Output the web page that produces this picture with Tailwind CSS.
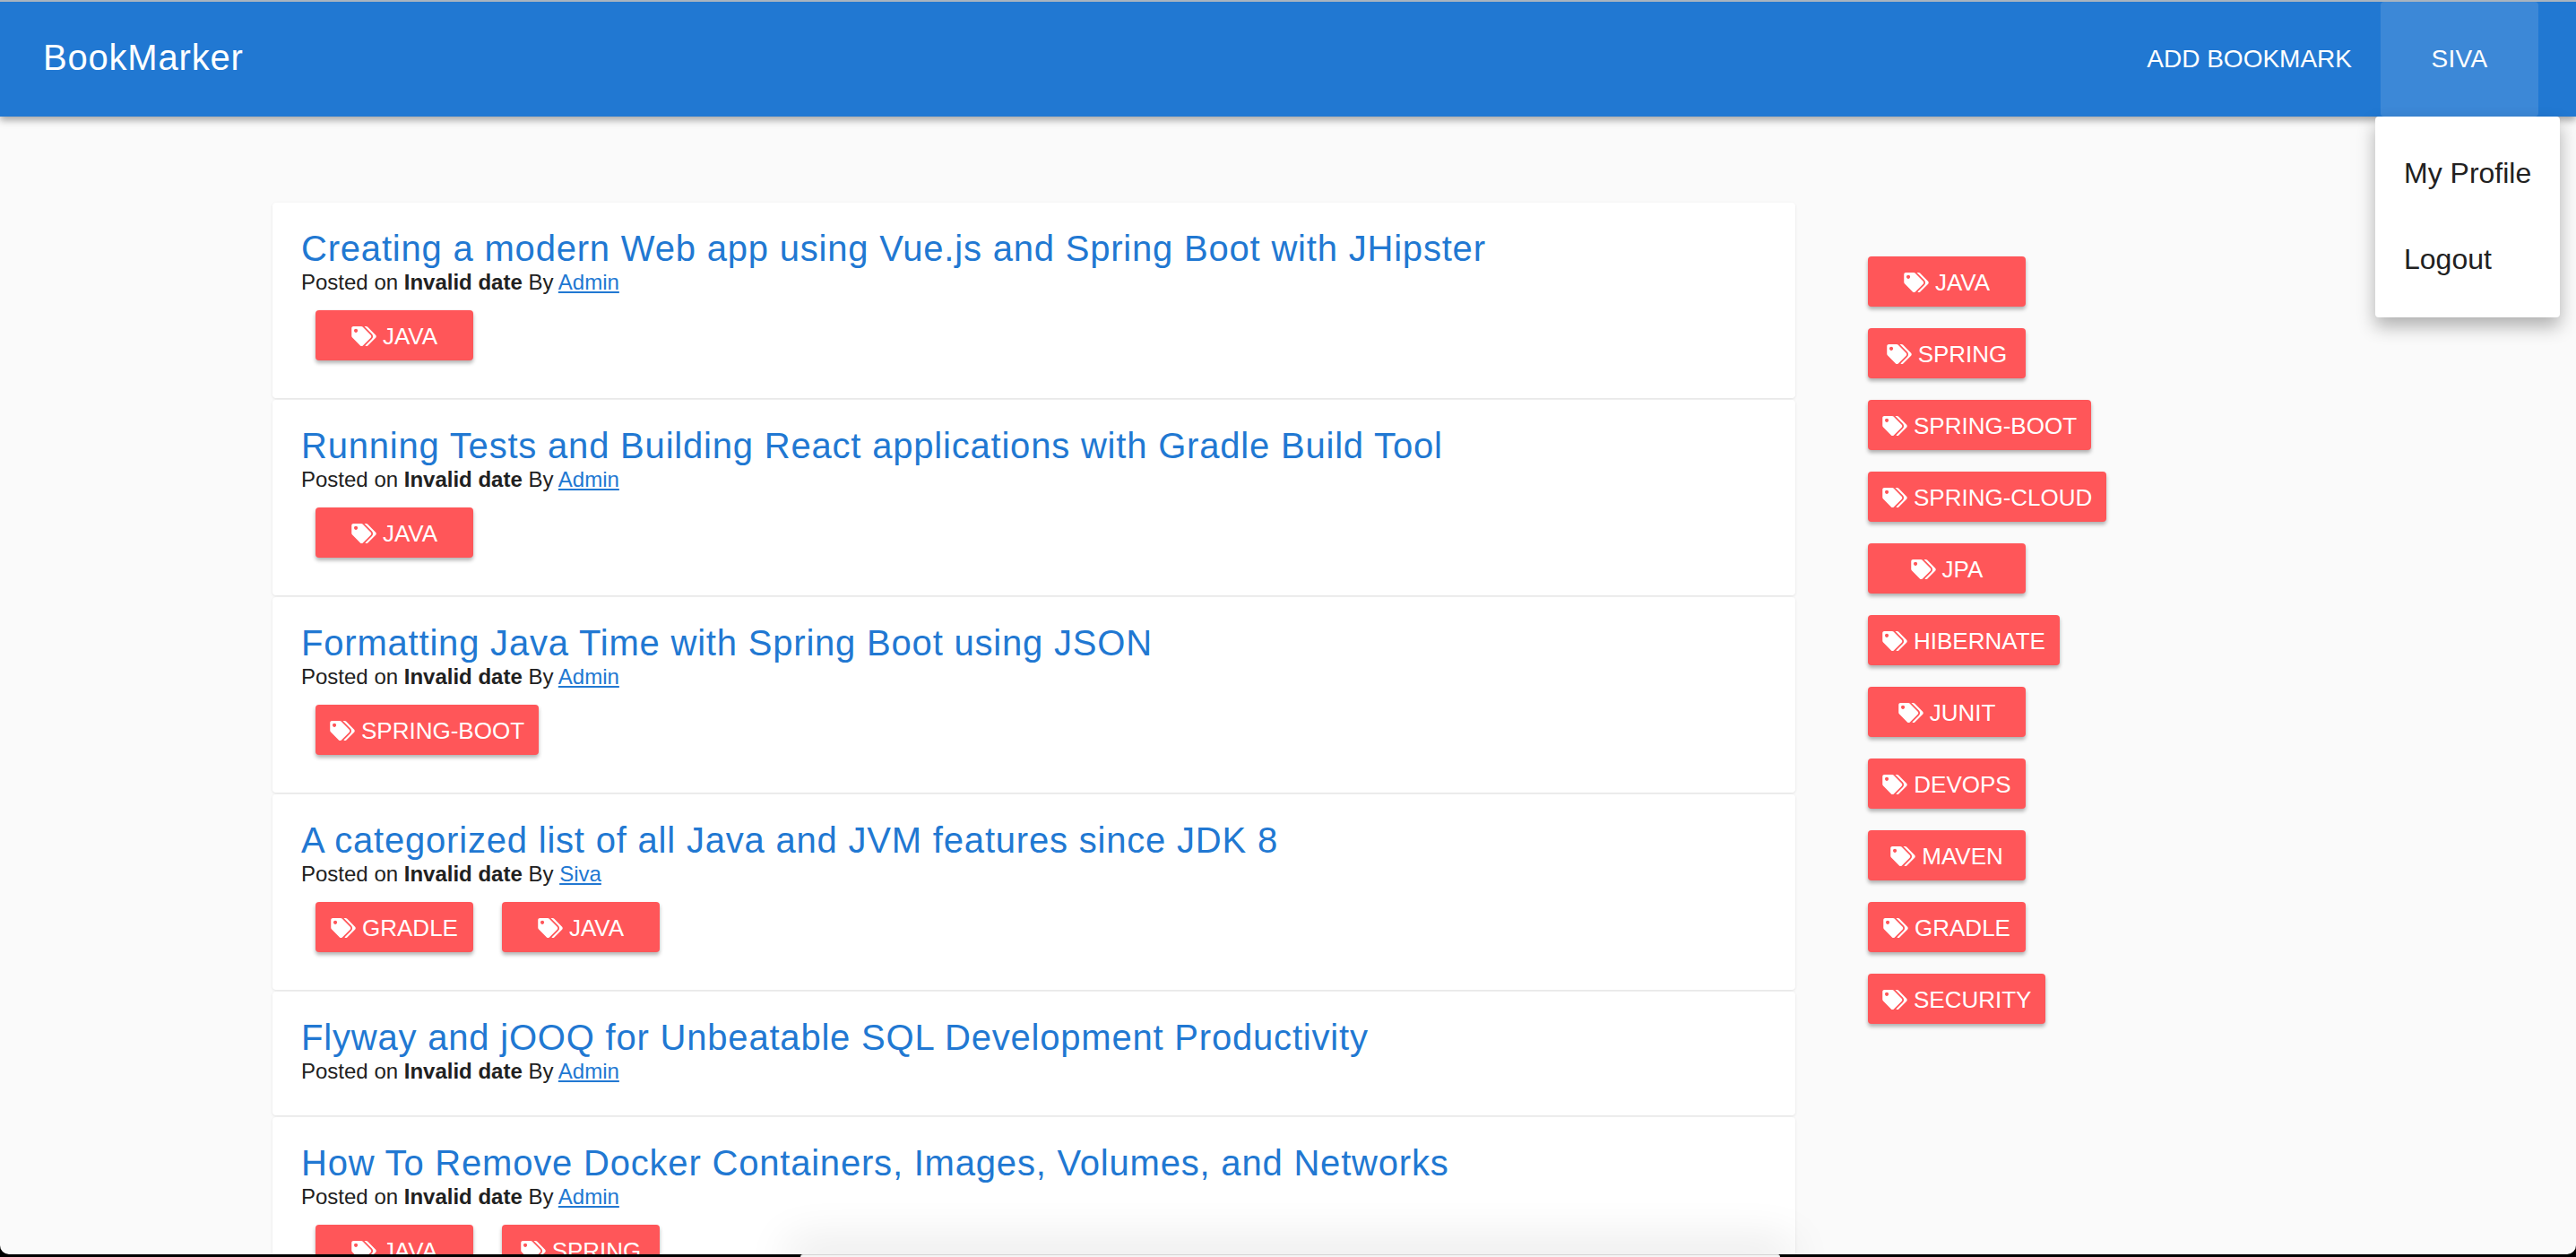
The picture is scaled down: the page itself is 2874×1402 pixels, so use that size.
<!DOCTYPE html>
<html lang="en">
<head>
    <meta charset="UTF-8">
    <title>BookMarker</title>
    <script src="https://cdn.jsdelivr.net/npm/@tailwindcss/browser@4"></script>
</head>
<body class="h-[1402px] overflow-hidden bg-[#fafafa] font-['Liberation_Sans',Arial,sans-serif] text-[#212121]">

    <!-- Hidden sprite for the tags icon -->
    <svg class="hidden">
        <symbol id="tags" viewBox="0 0 640 512">
            <path fill="currentColor" d="M497.941 225.941L286.059 14.059A48 48 0 0 0 252.118 0H48C21.49 0 0 21.49 0 48v204.118a48 48 0 0 0 14.059 33.941l211.882 211.882c18.744 18.745 49.136 18.746 67.882 0l204.118-204.118c18.745-18.745 18.745-49.137 0-67.882zM112 160c-26.51 0-48-21.49-48-48s21.49-48 48-48 48 21.49 48 48-21.49 48-48 48zm513.941 133.823L421.823 497.941c-18.745 18.745-49.137 18.745-67.882 0l-.36-.36L527.64 323.522c16.999-16.999 26.36-39.6 26.36-63.64s-9.362-46.641-26.36-63.64L331.397 0h48.721a48 48 0 0 1 33.941 14.059l211.882 211.882c18.745 18.745 18.745 49.137 0 67.882z"/>
        </symbol>
    </svg>

    <!-- App bar -->
    <header class="relative z-10 h-[130px] flex items-center justify-between bg-[#2178d2] border-t-2 border-[#a9b4bf] pl-[48px] pr-[42px] text-white shadow-[0_4px_8px_rgba(0,0,0,0.35)]">
        <a class="text-[40px] leading-none tracking-[0.8px] pb-[4px]">BookMarker</a>
        <nav class="flex items-center h-full">
            <a class="text-[28px] pr-[32px]">ADD BOOKMARK</a>
            <a class="w-[176px] h-full flex items-center justify-center bg-white/12 rounded-[4px] text-[28px] tracking-[0.3px]">SIVA</a>
        </nav>
    </header>

    <!-- User menu -->
    <div class="absolute z-20 left-[2650px] top-[130px] w-[206px] h-[224px] py-[16px] bg-white rounded-[4px] text-[32px] shadow-[0_10px_20px_rgba(0,0,0,0.3)]">
        <div class="h-[96px] pl-[32px] pb-[3px] flex items-center">My Profile</div>
        <div class="h-[96px] pl-[32px] pb-[3px] flex items-center">Logout</div>
    </div>

    <main class="flex pl-[304px] pt-[96px]">
        <!-- Bookmark list -->
        <section class="w-[1699px] shrink-0 flex flex-col gap-[2px]">
            <article class="h-[218px] bg-white rounded-[4px] px-[32px] pt-[28px] shadow-[0_1px_3px_rgba(0,0,0,0.1)]">
                <h2 class="text-[40px] leading-[46px] tracking-[0.8px] text-[#2178d2]">Creating a modern Web app using Vue.js and Spring Boot with JHipster</h2>
                <p class="text-[24px] leading-[34px] -mt-[2px]">Posted on <b>Invalid date</b> By <a class="text-[#2178d2] underline">Admin</a></p>
                <div class="flex gap-[32px] pl-[16px] mt-[14px]">
                    <a class="h-[56px] min-w-[176px] px-[16px] pt-[2px] flex items-center justify-center gap-[7px] rounded-[4px] bg-[#ff5659] text-white text-[26px] shadow-[0_3px_4px_rgba(0,0,0,0.3)]"><svg class="w-[28px] h-[22px]"><use href="#tags"/></svg>JAVA</a>
                </div>
            </article>
            <article class="h-[218px] bg-white rounded-[4px] px-[32px] pt-[28px] shadow-[0_1px_3px_rgba(0,0,0,0.1)]">
                <h2 class="text-[40px] leading-[46px] tracking-[0.8px] text-[#2178d2]">Running Tests and Building React applications with Gradle Build Tool</h2>
                <p class="text-[24px] leading-[34px] -mt-[2px]">Posted on <b>Invalid date</b> By <a class="text-[#2178d2] underline">Admin</a></p>
                <div class="flex gap-[32px] pl-[16px] mt-[14px]">
                    <a class="h-[56px] min-w-[176px] px-[16px] pt-[2px] flex items-center justify-center gap-[7px] rounded-[4px] bg-[#ff5659] text-white text-[26px] shadow-[0_3px_4px_rgba(0,0,0,0.3)]"><svg class="w-[28px] h-[22px]"><use href="#tags"/></svg>JAVA</a>
                </div>
            </article>
            <article class="h-[218px] bg-white rounded-[4px] px-[32px] pt-[28px] shadow-[0_1px_3px_rgba(0,0,0,0.1)]">
                <h2 class="text-[40px] leading-[46px] tracking-[0.8px] text-[#2178d2]">Formatting Java Time with Spring Boot using JSON</h2>
                <p class="text-[24px] leading-[34px] -mt-[2px]">Posted on <b>Invalid date</b> By <a class="text-[#2178d2] underline">Admin</a></p>
                <div class="flex gap-[32px] pl-[16px] mt-[14px]">
                    <a class="h-[56px] min-w-[176px] px-[16px] pt-[2px] flex items-center justify-center gap-[7px] rounded-[4px] bg-[#ff5659] text-white text-[26px] shadow-[0_3px_4px_rgba(0,0,0,0.3)]"><svg class="w-[28px] h-[22px]"><use href="#tags"/></svg>SPRING-BOOT</a>
                </div>
            </article>
            <article class="h-[218px] bg-white rounded-[4px] px-[32px] pt-[28px] shadow-[0_1px_3px_rgba(0,0,0,0.1)]">
                <h2 class="text-[40px] leading-[46px] tracking-[0.8px] text-[#2178d2]">A categorized list of all Java and JVM features since JDK 8</h2>
                <p class="text-[24px] leading-[34px] -mt-[2px]">Posted on <b>Invalid date</b> By <a class="text-[#2178d2] underline">Siva</a></p>
                <div class="flex gap-[32px] pl-[16px] mt-[14px]">
                    <a class="h-[56px] min-w-[176px] px-[16px] pt-[2px] flex items-center justify-center gap-[7px] rounded-[4px] bg-[#ff5659] text-white text-[26px] shadow-[0_3px_4px_rgba(0,0,0,0.3)]"><svg class="w-[28px] h-[22px]"><use href="#tags"/></svg>GRADLE</a>
                    <a class="h-[56px] min-w-[176px] px-[16px] pt-[2px] flex items-center justify-center gap-[7px] rounded-[4px] bg-[#ff5659] text-white text-[26px] shadow-[0_3px_4px_rgba(0,0,0,0.3)]"><svg class="w-[28px] h-[22px]"><use href="#tags"/></svg>JAVA</a>
                </div>
            </article>
            <article class="h-[138px] bg-white rounded-[4px] px-[32px] pt-[28px] shadow-[0_1px_3px_rgba(0,0,0,0.1)]">
                <h2 class="text-[40px] leading-[46px] tracking-[0.8px] text-[#2178d2]">Flyway and jOOQ for Unbeatable SQL Development Productivity</h2>
                <p class="text-[24px] leading-[34px] -mt-[2px]">Posted on <b>Invalid date</b> By <a class="text-[#2178d2] underline">Admin</a></p>
            </article>
            <article class="h-[218px] bg-white rounded-[4px] px-[32px] pt-[28px] shadow-[0_1px_3px_rgba(0,0,0,0.1)]">
                <h2 class="text-[40px] leading-[46px] tracking-[0.8px] text-[#2178d2]">How To Remove Docker Containers, Images, Volumes, and Networks</h2>
                <p class="text-[24px] leading-[34px] -mt-[2px]">Posted on <b>Invalid date</b> By <a class="text-[#2178d2] underline">Admin</a></p>
                <div class="flex gap-[32px] pl-[16px] mt-[14px]">
                    <a class="h-[56px] min-w-[176px] px-[16px] pt-[2px] flex items-center justify-center gap-[7px] rounded-[4px] bg-[#ff5659] text-white text-[26px] shadow-[0_3px_4px_rgba(0,0,0,0.3)]"><svg class="w-[28px] h-[22px]"><use href="#tags"/></svg>JAVA</a>
                    <a class="h-[56px] min-w-[176px] px-[16px] pt-[2px] flex items-center justify-center gap-[7px] rounded-[4px] bg-[#ff5659] text-white text-[26px] shadow-[0_3px_4px_rgba(0,0,0,0.3)]"><svg class="w-[28px] h-[22px]"><use href="#tags"/></svg>SPRING</a>
                </div>
            </article>
        </section>

        <!-- Tag cloud -->
        <aside class="flex flex-col items-start gap-[24px] ml-[81px] pt-[60px]">
            <a class="h-[56px] min-w-[176px] px-[16px] pt-[2px] flex items-center justify-center gap-[7px] rounded-[4px] bg-[#ff5659] text-white text-[26px] shadow-[0_3px_4px_rgba(0,0,0,0.3)]"><svg class="w-[28px] h-[22px]"><use href="#tags"/></svg>JAVA</a>
            <a class="h-[56px] min-w-[176px] px-[16px] pt-[2px] flex items-center justify-center gap-[7px] rounded-[4px] bg-[#ff5659] text-white text-[26px] shadow-[0_3px_4px_rgba(0,0,0,0.3)]"><svg class="w-[28px] h-[22px]"><use href="#tags"/></svg>SPRING</a>
            <a class="h-[56px] min-w-[176px] px-[16px] pt-[2px] flex items-center justify-center gap-[7px] rounded-[4px] bg-[#ff5659] text-white text-[26px] shadow-[0_3px_4px_rgba(0,0,0,0.3)]"><svg class="w-[28px] h-[22px]"><use href="#tags"/></svg>SPRING-BOOT</a>
            <a class="h-[56px] min-w-[176px] px-[16px] pt-[2px] flex items-center justify-center gap-[7px] rounded-[4px] bg-[#ff5659] text-white text-[26px] shadow-[0_3px_4px_rgba(0,0,0,0.3)]"><svg class="w-[28px] h-[22px]"><use href="#tags"/></svg>SPRING-CLOUD</a>
            <a class="h-[56px] min-w-[176px] px-[16px] pt-[2px] flex items-center justify-center gap-[7px] rounded-[4px] bg-[#ff5659] text-white text-[26px] shadow-[0_3px_4px_rgba(0,0,0,0.3)]"><svg class="w-[28px] h-[22px]"><use href="#tags"/></svg>JPA</a>
            <a class="h-[56px] min-w-[176px] px-[16px] pt-[2px] flex items-center justify-center gap-[7px] rounded-[4px] bg-[#ff5659] text-white text-[26px] shadow-[0_3px_4px_rgba(0,0,0,0.3)]"><svg class="w-[28px] h-[22px]"><use href="#tags"/></svg>HIBERNATE</a>
            <a class="h-[56px] min-w-[176px] px-[16px] pt-[2px] flex items-center justify-center gap-[7px] rounded-[4px] bg-[#ff5659] text-white text-[26px] shadow-[0_3px_4px_rgba(0,0,0,0.3)]"><svg class="w-[28px] h-[22px]"><use href="#tags"/></svg>JUNIT</a>
            <a class="h-[56px] min-w-[176px] px-[16px] pt-[2px] flex items-center justify-center gap-[7px] rounded-[4px] bg-[#ff5659] text-white text-[26px] shadow-[0_3px_4px_rgba(0,0,0,0.3)]"><svg class="w-[28px] h-[22px]"><use href="#tags"/></svg>DEVOPS</a>
            <a class="h-[56px] min-w-[176px] px-[16px] pt-[2px] flex items-center justify-center gap-[7px] rounded-[4px] bg-[#ff5659] text-white text-[26px] shadow-[0_3px_4px_rgba(0,0,0,0.3)]"><svg class="w-[28px] h-[22px]"><use href="#tags"/></svg>MAVEN</a>
            <a class="h-[56px] min-w-[176px] px-[16px] pt-[2px] flex items-center justify-center gap-[7px] rounded-[4px] bg-[#ff5659] text-white text-[26px] shadow-[0_3px_4px_rgba(0,0,0,0.3)]"><svg class="w-[28px] h-[22px]"><use href="#tags"/></svg>GRADLE</a>
            <a class="h-[56px] min-w-[176px] px-[16px] pt-[2px] flex items-center justify-center gap-[7px] rounded-[4px] bg-[#ff5659] text-white text-[26px] shadow-[0_3px_4px_rgba(0,0,0,0.3)]"><svg class="w-[28px] h-[22px]"><use href="#tags"/></svg>SECURITY</a>
        </aside>
    </main>

    <!-- Black window edge with rounded corners -->
    <div class="absolute z-30 left-0 right-0 top-[1386px] h-[16px] overflow-hidden">
        <div class="h-[13px] rounded-b-[10px] shadow-[0_0_0_14px_#000]"></div>
    </div>
    <!-- Bar peeking in below the window, with its shadow -->
    <div class="absolute z-30 left-[893px] top-[1399px] w-[1093px] h-[3px] bg-[#f5f5f5] border-t border-[#d4d4d4] rounded-t-[3px]"></div>
    <div class="absolute z-20 left-[893px] top-[1399px] w-[1093px] h-[3px] shadow-[0_0_50px_14px_rgba(0,0,0,0.11)]"></div>
</body>
</html>
